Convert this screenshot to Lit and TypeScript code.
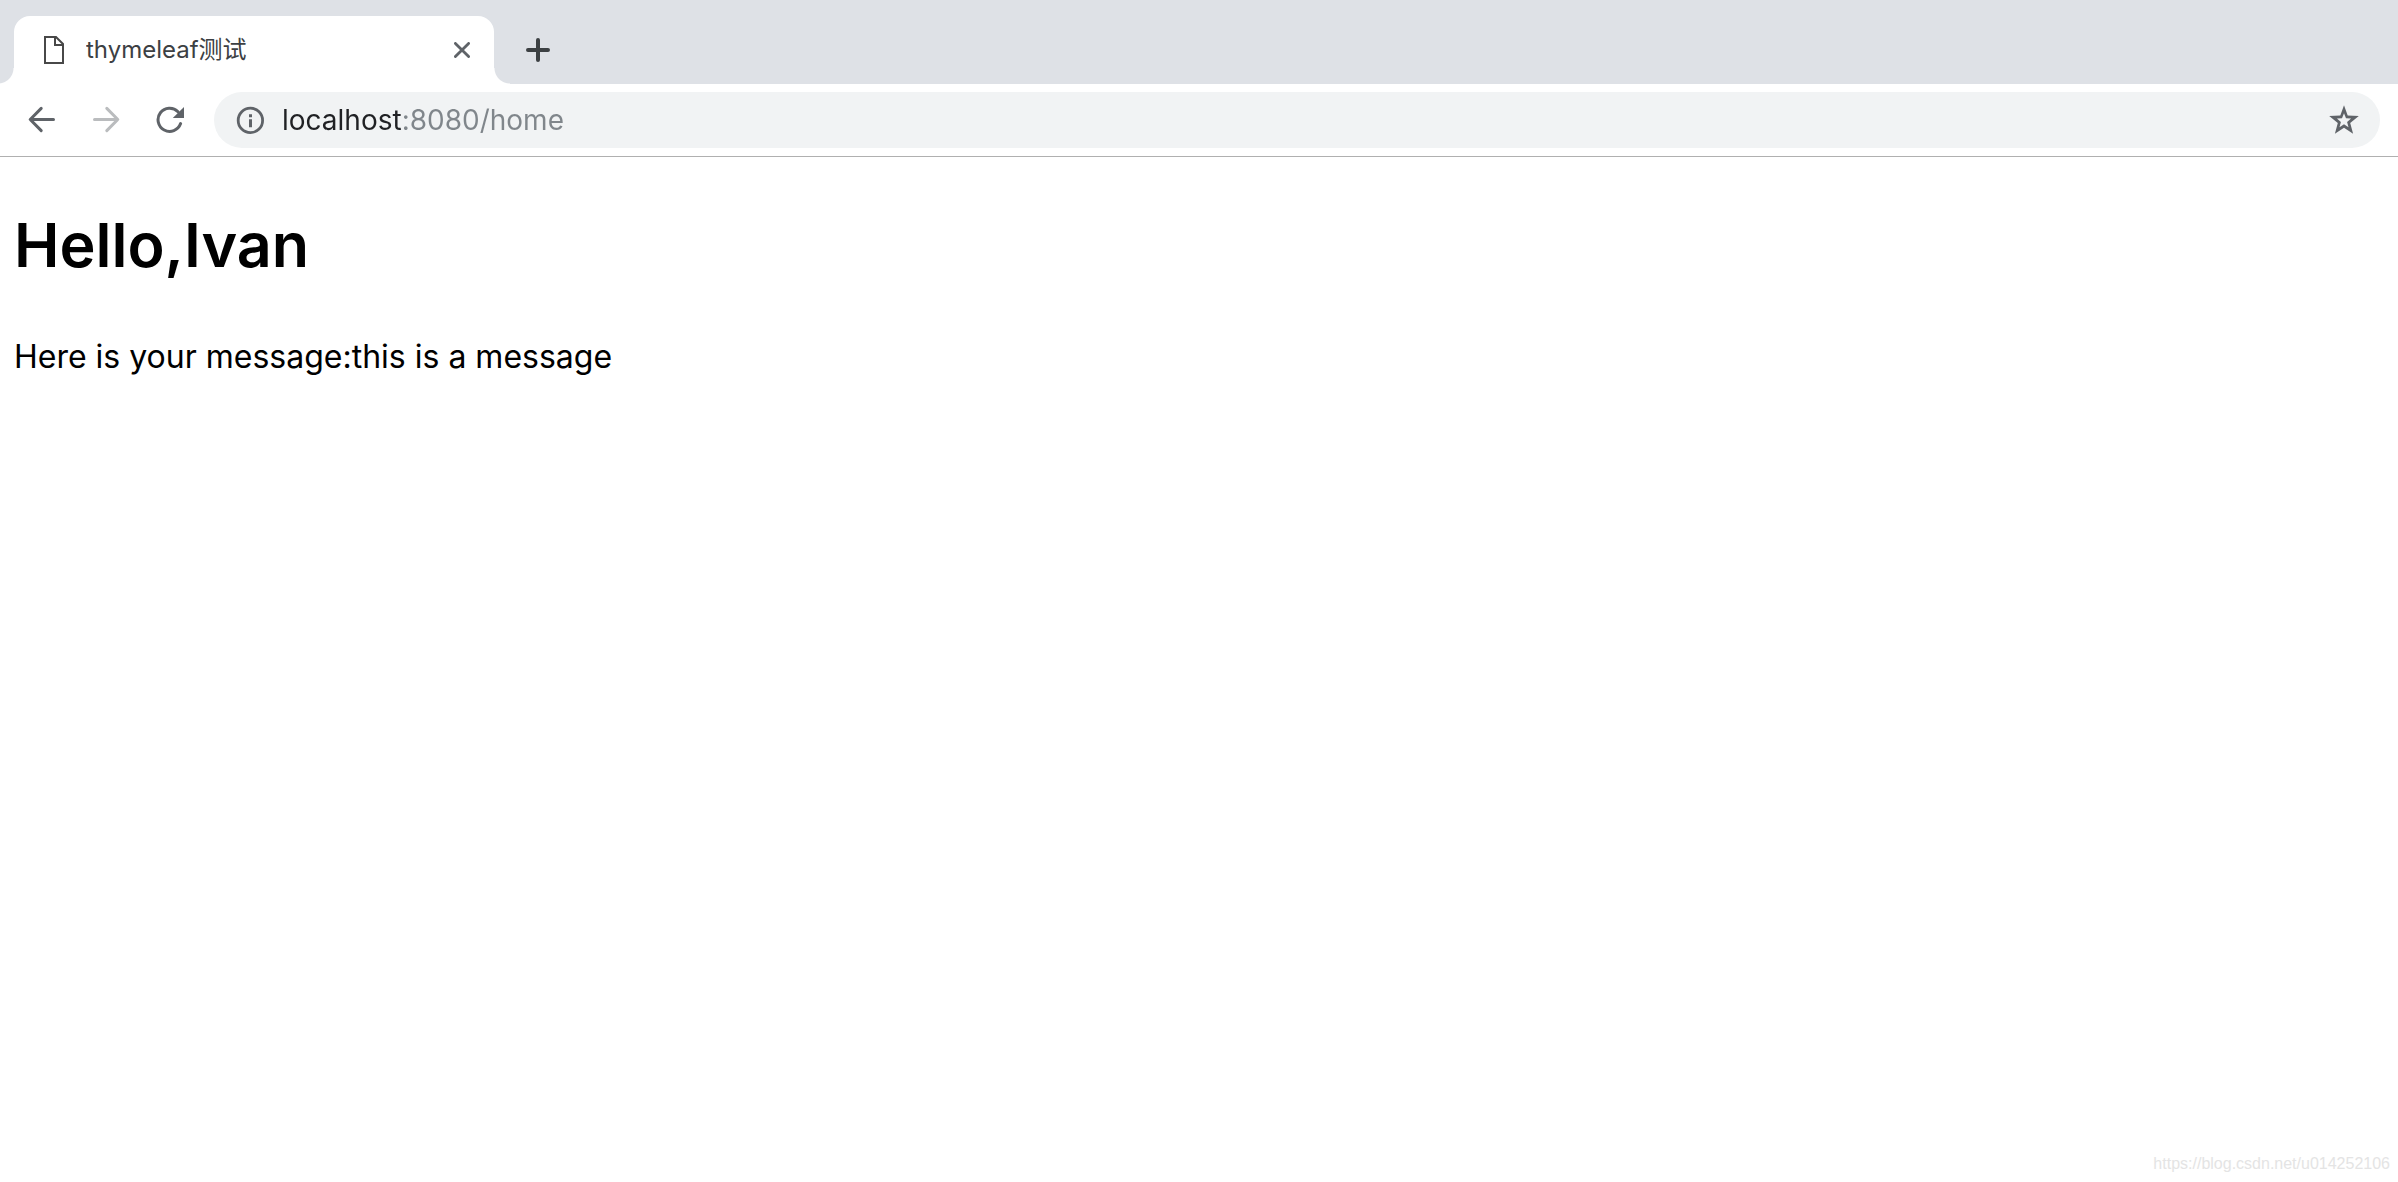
import { LitElement, html, css } from "lit";
import { customElement, state } from "lit/decorators.js";

@customElement("tab-strip")
class TabStrip extends LitElement {
  static styles = css`
    :host {
      display: block;
      background: #dee1e6;
    }
    .strip {
      display: flex;
      align-items: flex-start;
      padding: 16px 14px 0;
    }
    .tab {
      position: relative;
      display: flex;
      align-items: center;
      box-sizing: border-box;
      flex: 0 1 480px;
      height: 68px;
      padding: 0 16px 0 30px;
      border-radius: 16px 16px 0 0;
      background: #fff;
    }
    .tab::before,
    .tab::after {
      content: "";
      position: absolute;
      bottom: 0;
      width: 16px;
      height: 16px;
    }
    .tab::before {
      right: 100%;
      background: radial-gradient(circle at 0 0, transparent 15px, #fff 16px);
    }
    .tab::after {
      left: 100%;
      background: radial-gradient(circle at 100% 0, transparent 15px, #fff 16px);
    }
    .favicon {
      flex: none;
      width: 20px;
      height: 28px;
    }
    .title {
      flex: 1;
      margin-left: 22px;
      overflow: hidden;
      white-space: nowrap;
      font: 24px/32px Inter, "Noto Sans CJK SC", sans-serif;
      color: #3c4043;
    }
    button {
      display: flex;
      align-items: center;
      justify-content: center;
      width: 32px;
      height: 68px;
      padding: 0;
      border: 0;
      background: none;
      color: #5f6368;
    }
    .add {
      margin-left: 28px;
      color: #3c4043;
    }
    svg {
      display: block;
    }
  `;

  render() {
    return html`
      <div class="strip">
        <div class="tab">
          <svg class="favicon" viewBox="0 0 20 28" fill="none" stroke="#484848" stroke-width="2">
            <path d="M1 1H12L19 8V27H1Z" />
            <path d="M11 1V9H19" />
          </svg>
          <span class="title">thymeleaf测试</span>
          <button aria-label="Close tab">
            <svg width="16" height="16" viewBox="0 0 16 16" stroke="currentColor" stroke-width="2.8" stroke-linecap="round">
              <path d="M1.4 1.4L14.6 14.6M14.6 1.4L1.4 14.6" />
            </svg>
          </button>
        </div>
        <button class="add" aria-label="New tab">
          <svg width="24" height="24" viewBox="0 0 24 24" stroke="currentColor" stroke-width="4" stroke-linecap="round">
            <path d="M12 2V22M2 12H22" />
          </svg>
        </button>
      </div>
    `;
  }
}

@customElement("tool-bar")
class ToolBar extends LitElement {
  static styles = css`
    :host {
      display: block;
      background: #fff;
    }
    .bar {
      display: flex;
      align-items: center;
      padding: 8px 18px 8px 10px;
      border-bottom: 1px solid #b0b0b0;
    }
    button {
      display: flex;
      align-items: center;
      justify-content: center;
      flex: none;
      width: 64px;
      height: 56px;
      padding: 0;
      border: 0;
      background: none;
      color: #5f6368;
    }
    button:disabled {
      color: #babcbe;
    }
    .address {
      display: flex;
      align-items: center;
      flex: 1;
      height: 56px;
      margin-left: 12px;
      padding-left: 22px;
      border-radius: 28px;
      background: #f1f3f4;
    }
    .info {
      width: 28px;
    }
    .url {
      flex: 1;
      min-width: 0;
      height: 40px;
      margin-left: 18px;
      padding: 0;
      border: 0;
      outline: 0;
      font: 28px/40px Inter, sans-serif;
      color: #80868b;
      background: linear-gradient(90deg, #202124 120px, #80868b 120px);
      background-clip: text;
      -webkit-background-clip: text;
      -webkit-text-fill-color: transparent;
    }
    .star {
      width: 72px;
    }
    svg {
      display: block;
    }
  `;

  render() {
    return html`
      <div class="bar">
        <button aria-label="Back">
          <svg width="28" height="28" viewBox="0 0 28 28" fill="none" stroke="currentColor" stroke-width="3" stroke-linecap="round" stroke-linejoin="round">
            <path d="M13.2 2.4L2.2 13.5L13.2 24.6M2.4 13.5H25.5" />
          </svg>
        </button>
        <button aria-label="Forward" disabled>
          <svg width="28" height="28" viewBox="0 0 28 28" fill="none" stroke="currentColor" stroke-width="3" stroke-linecap="round" stroke-linejoin="round">
            <path d="M14.8 2.4L25.8 13.5L14.8 24.6M25.6 13.5H2.5" />
          </svg>
        </button>
        <button aria-label="Reload">
          <svg width="28" height="28" viewBox="0 0 28 28" fill="none">
            <path d="M24.6 17.6A11.6 11.6 0 1 1 22 5.7" stroke="currentColor" stroke-width="3" stroke-linecap="round" />
            <path d="M28 1V12H16.8Z" fill="currentColor" />
          </svg>
        </button>
        <div class="address">
          <button class="info" aria-label="View site information">
            <svg width="28" height="28" viewBox="0 0 28 28">
              <circle cx="14.4" cy="14.4" r="12.2" fill="none" stroke="currentColor" stroke-width="2.8" />
              <path d="M13 8.2H16V11.2H13ZM13 13.2H16V21.2H13Z" fill="currentColor" />
            </svg>
          </button>
          <input class="url" type="text" aria-label="Address" value="localhost:8080/home" spellcheck="false" />
          <button class="star" aria-label="Bookmark this page">
            <svg width="30" height="30" viewBox="0 0 30 30">
              <path
                fill="currentColor"
                fill-rule="evenodd"
                d="M15 0.2L18.7 10.4L29.8 11.1L21.2 18L24.1 28.8L15 22.8L5.9 28.8L8.8 18L0.2 11.1L11.3 10.4ZM15 8.2L13 13.2L7.9 13.6L11.9 16.9L10.5 22.2L15 19.3L19.5 22.2L18.1 16.9L22.1 13.6L17 13.2Z"
              />
            </svg>
          </button>
        </div>
      </div>
    `;
  }
}

@customElement("app-root")
class AppRoot extends LitElement {
  static styles = css`
    :host {
      display: flex;
      flex-direction: column;
      min-height: 100vh;
      background: #fff;
      color: #000;
      font-family: Inter, sans-serif;
    }
    main {
      flex: 1;
      padding: 40px 14px;
    }
    h1 {
      margin: 0;
      font-size: 61px;
      line-height: 96px;
      font-weight: 600;
    }
    p {
      margin: 40px 0 0;
      font-size: 32px;
      line-height: 48px;
    }
    footer {
      padding: 0 8px 8px;
      text-align: right;
      font: 16px/20px "Liberation Sans", sans-serif;
      color: #e4e4e4;
    }
  `;

  @state() private name = "Ivan";
  @state() private message = "this is a message";

  render() {
    return html`
      <tab-strip></tab-strip>
      <tool-bar></tool-bar>
      <main>
        <h1>Hello,${this.name}</h1>
        <p>Here is your message:${this.message}</p>
      </main>
      <footer>https://blog.csdn.net/u014252106</footer>
    `;
  }
}
